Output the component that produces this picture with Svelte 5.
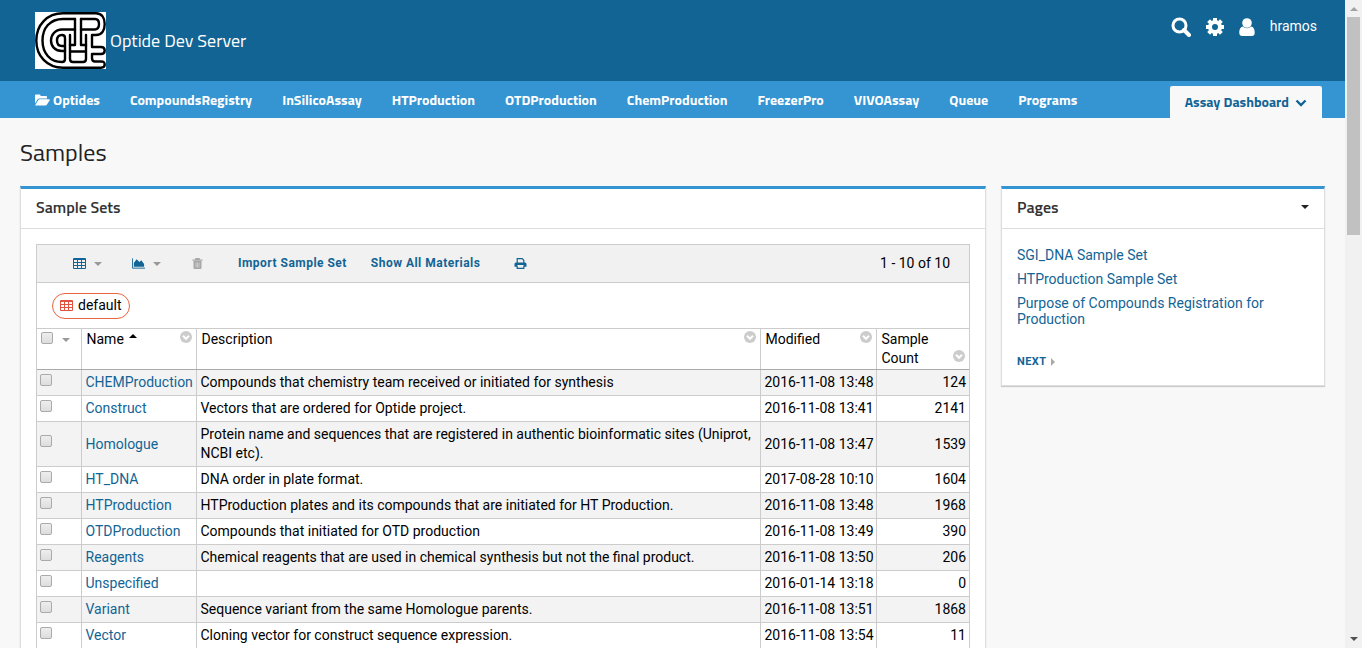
<script>
  const tabs = ['CompoundsRegistry', 'InSilicoAssay', 'HTProduction', 'OTDProduction', 'ChemProduction', 'FreezerPro', 'VIVOAssay', 'Queue', 'Programs'];
  const rows = [
    ['CHEMProduction', 'Compounds that chemistry team received or initiated for synthesis', '2016-11-08 13:48', 124],
    ['Construct', 'Vectors that are ordered for Optide project.', '2016-11-08 13:41', 2141],
    ['Homologue', 'Protein name and sequences that are registered in authentic bioinformatic sites (Uniprot, NCBI etc).', '2016-11-08 13:47', 1539],
    ['HT_DNA', 'DNA order in plate format.', '2017-08-28 10:10', 1604],
    ['HTProduction', 'HTProduction plates and its compounds that are initiated for HT Production.', '2016-11-08 13:48', 1968],
    ['OTDProduction', 'Compounds that initiated for OTD production', '2016-11-08 13:49', 390],
    ['Reagents', 'Chemical reagents that are used in chemical synthesis but not the final product.', '2016-11-08 13:50', 206],
    ['Unspecified', '', '2016-01-14 13:18', 0],
    ['Variant', 'Sequence variant from the same Homologue parents.', '2016-11-08 13:51', 1868],
    ['Vector', 'Cloning vector for construct sequence expression.', '2016-11-08 13:54', 11]
  ];
  const pages = ['SGI_DNA Sample Set', 'HTProduction Sample Set', 'Purpose of Compounds Registration for Production'];
</script>

{#snippet grid()}
  <svg class="grid" viewBox="0 0 13 11" aria-hidden="true">
    <path fill="currentColor" fill-rule="evenodd" d="M1 0h11a1 1 0 0 1 1 1v9a1 1 0 0 1-1 1H1a1 1 0 0 1-1-1V1a1 1 0 0 1 1-1zM1 2v2h3V2zm4 0v2h3V2zm4 0v2h3V2zM1 5v2h3V5zm4 0v2h3V5zm4 0v2h3V5zM1 8v2h3V8zm4 0v2h3V8zm4 0v2h3V8z" />
  </svg>
{/snippet}

{#snippet menu(label)}
  <button class="colmenu" aria-label={label}>
    <svg viewBox="0 0 12 12" aria-hidden="true"><circle cx="6" cy="6" r="6" fill="#ccc" /><path d="M3 4.800l3 3 3-3" fill="none" stroke="#fff" stroke-width="2" /></svg>
  </button>
{/snippet}

<div class="window">
  <div class="page">
    <header>
      <a class="brand" href="#home">
        <svg class="logo" viewBox="0 0 71 57" aria-hidden="true">
          <rect width="71" height="57" fill="#fff" />
          <g fill="none" stroke="#000" stroke-width="2.400" stroke-linejoin="round" stroke-linecap="round">
            <path d="M61 1.300H28C12 1.300 1.300 13 1.300 28.500S12 55.700 28 55.700H66Q69.700 55.700 69.700 52.500T66 49.500H60Q57 49.500 57 46V42H66Q69.700 42 69.700 38.500T66 35H57V23H61C67 23 69.700 18 69.700 12S67 1.300 61 1.300Z" />
            <path d="M40 7H28C15 7 7.500 16 7.500 28.500S15 50 27 50Q30 50 30 47V39H27C20 39 16 34 16 28.500S20 17.500 27 17.500H40" />
            <path d="M46 7H60Q64 7 64 12T60 17.500H46" />
            <path d="M30 39V26Q30 23 27 23Q22 23 22 28.500T27 34H30" />
            <path d="M40 7V33H35V23M46 7V33H51V23" />
            <path d="M35 33V47Q35 50 38 50H48Q51 50 51 47V33M35 39.500H51" />
          </g>
        </svg>
        <span>Optide Dev Server</span>
      </a>
      <div class="user">
        <button class="search" aria-label="Search"><svg viewBox="0 0 20 20" aria-hidden="true"><circle cx="8.500" cy="8.500" r="6.500" fill="none" stroke="#fff" stroke-width="3" /><path d="M13 13l5 5" stroke="#fff" stroke-width="4" stroke-linecap="round" /></svg></button>
        <button aria-label="Admin"><svg viewBox="0 0 20 20" aria-hidden="true"><circle cx="10" cy="10" r="5" fill="none" stroke="#fff" stroke-width="4" /><g stroke="#fff" stroke-width="4"><path d="M10 1v4M10 15v4M1 10h4M15 10h4M3.600 3.600l3 3M13.400 13.400l3 3M3.600 16.400l3-3M13.400 6.600l3-3" /></g></svg></button>
        <button aria-label="Account"><svg viewBox="0 0 20 20" aria-hidden="true"><circle cx="10" cy="6" r="4.800" fill="#fff" /><path d="M6 9.500C3 10 2.300 13 2.300 16c0 2 1 3 3 3h9.400c2 0 3-1 3-3 0-3-.7-6-3.700-6.500-2 2.200-6 2.200-8 0z" fill="#fff" /></svg></button>
        <span>hramos</span>
      </div>
    </header>
    <nav>
      <a href="#optides" class="folder"><svg viewBox="0 0 15 12" aria-hidden="true"><path fill="#fff" d="M0 9.500V1.500Q0 .5 1 .5h3.500q1 0 1 1V2H11q1 0 1 1v1.500H4.500q-1.200 0-2 1zM.3 11L3.200 6.200q.6-.9 1.600-.9H14q1.300 0 .7 1L12 10.600q-.6.900-1.600.9H.8q-.7 0-.5-.5z" /></svg>Optides</a>
      {#each tabs as tab}<a href="#{tab}">{tab}</a>{/each}
      <a href="#dashboard" class="active">Assay Dashboard<svg viewBox="0 0 12 8" aria-hidden="true"><path d="M1.500 1.500L6 6l4.500-4.500" fill="none" stroke="currentColor" stroke-width="2.400" /></svg></a>
    </nav>
    <main>
      <h1>Samples</h1>
      <div class="columns">
        <section>
          <h2>Sample Sets</h2>
          <div class="body">
            <div class="region">
              <div class="toolbar">
                <button class="views" aria-label="Grid views">{@render grid()}<i class="caret"></i></button>
                <button class="charts" aria-label="Charts"><svg viewBox="0 0 14 11" aria-hidden="true"><path d="M.5 0v10.500H14" fill="none" stroke="currentColor" /><path fill="currentColor" d="M2 9V5l3-4 3 3 2-2 3 4v3z" /></svg><i class="caret"></i></button>
                <button class="delete" aria-label="Delete" disabled><svg viewBox="0 0 10 11" aria-hidden="true"><path fill="#a8a8a8" d="M3 0h4l.7 1.500H10v1.300H0V1.500h2.300zM1 3h8v7q0 1-1 1H2q-1 0-1-1z" /><path d="M3.500 4.500v5M5 4.500v5M6.500 4.500v5" stroke="#ddd" stroke-width=".7" /></svg></button>
                <button class="import">Import Sample Set</button>
                <button class="show">Show All Materials</button>
                <button aria-label="Print"><svg viewBox="0 0 12 11" aria-hidden="true"><path d="M2.700 5V.7h5L9.300 2.300V5M2.700 7.500v2.800h6.600V7.500" fill="none" stroke="currentColor" stroke-width="1.200" /><path fill="currentColor" d="M1.500 4.500h9Q12 4.500 12 6v2.800H9.500V7h-7v1.800H0V6q0-1.500 1.500-1.500z" /></svg></button>
                <span class="count">1 - 10 of 10</span>
              </div>
              <div class="context"><button>{@render grid()}default</button></div>
              <table>
                <colgroup><col class="c1" /><col class="c2" /><col /><col class="c4" /><col class="c5" /></colgroup>
                <thead>
                  <tr>
                    <th><input type="checkbox" aria-label="Select all" /><i class="caret"></i></th>
                    <th>Name<i class="sorted"></i>{@render menu('Name menu')}</th>
                    <th>Description{@render menu('Description menu')}</th>
                    <th>Modified{@render menu('Modified menu')}</th>
                    <th>Sample Count{@render menu('Sample Count menu')}</th>
                  </tr>
                </thead>
                <tbody>
                  {#each rows as [name, description, modified, count]}
                    <tr>
                      <td class="pick"><input type="checkbox" aria-label="Select {name}" /></td>
                      <td><a href="#{name}">{name}</a></td>
                      <td>{description}</td>
                      <td class="date">{modified}</td>
                      <td class="num">{count}</td>
                    </tr>
                  {/each}
                </tbody>
              </table>
            </div>
          </div>
        </section>
        <section class="side">
          <h2>Pages<button aria-label="Pages menu"><i class="caret"></i></button></h2>
          <div class="body">
            <ul>
              {#each pages as p}<li><a href="#{p}">{p}</a></li>{/each}
            </ul>
            <a class="next" href="#next">NEXT<i></i></a>
          </div>
        </section>
      </div>
    </main>
  </div>
  <div class="scrollbar" aria-hidden="true"><i class="up"></i><span></span><i class="down"></i></div>
</div>

<style>
  :global(body) { margin: 0; }
  * { box-sizing: border-box; }
  .window { display: flex; height: 100vh; overflow: hidden; font: 14px/19px Roboto, sans-serif; color: #000; }
  .page { flex: 1; min-width: 0; overflow: hidden; background: #f8f8f8; }
  a { color: #126495; text-decoration: none; }
  button { display: inline-flex; align-items: center; padding: 0; border: 0; background: none; color: inherit; font: inherit; }
  header { display: flex; justify-content: space-between; height: 81px; padding: 12px 28px 12px 35px; background: #126495; color: #fff; }
  .brand { display: flex; align-items: center; gap: 4px; height: 57px; color: #fff; font: 18px "Titillium Web", "Noto Sans", sans-serif; }
  .logo { width: 71px; height: 57px; }
  .user { display: flex; align-items: center; gap: 12px; height: 30px; }
  .user svg { width: 20px; height: 20px; }
  .user .search { margin-right: 2px; }
  .user span { margin-left: 1px; padding-bottom: 2px; }
  nav { display: flex; gap: 30px; height: 37px; padding: 0 23px 0 35px; background: #3495d2; font: bold 14px/38px "Titillium Web", "Noto Sans", sans-serif; white-space: nowrap; }
  nav a { color: #fff; }
  .folder svg { width: 15px; height: 12px; margin-right: 3px; vertical-align: -1px; }
  nav .active { align-self: flex-end; height: 32px; margin-left: auto; padding: 0 15px; border-radius: 2px 2px 0 0; background: #f8f8f8; color: #126495; line-height: 31px; }
  .active svg { width: 12px; height: 8px; margin-left: 6px; }
  main { padding: 20px; }
  h1 { margin: 0 0 20px; font: 24px/28px "Titillium Web", "Noto Sans", sans-serif; color: #222; }
  .columns { display: flex; align-items: flex-start; gap: 15px; }
  section { flex: 1; min-width: 0; border: 1px solid #ddd; border-top: 3px solid #3495d2; background: #fff; box-shadow: 0 1px 1px #ccc; }
  .side { flex: 0 0 324px; }
  h2 { display: flex; justify-content: space-between; align-items: center; height: 40px; margin: 0; padding: 0 15px 3px; border-bottom: 1px solid #ddd; font: 600 16px "Titillium Web", "Noto Sans", sans-serif; color: #333; }
  .body { padding: 15px; }
  .region { border: 1px solid #ccc; }
  .toolbar { display: flex; align-items: center; height: 38px; padding: 0 19px 0 36px; border-bottom: 1px solid #ccc; background: #f1f1f1; color: #126495; }
  .toolbar button { font-size: 12px; font-weight: 700; letter-spacing: 0.04em; }
  .toolbar svg { width: 13px; height: 11px; }
  .toolbar .views, .toolbar .charts { gap: 8px; margin-right: 30px; }
  .toolbar .delete { margin-right: 34px; }
  .toolbar .import { margin-right: 24px; }
  .toolbar .show { margin-right: 34px; }
  .count { margin-left: auto; color: #000; }
  .caret { display: inline-block; border: 4px solid transparent; border-top-color: #999; border-bottom: 0; }
  h2 .caret { border-top-color: #222; }
  .context { display: flex; align-items: center; height: 45px; padding-left: 15px; }
  .context button { gap: 5px; height: 26px; padding: 0 7px; border: 1px solid #e8643c; border-radius: 13px; }
  .grid { width: 13px; height: 11px; }
  .context .grid { color: #e2533f; }
  table { width: 100%; table-layout: fixed; border-collapse: collapse; border-top: 1px solid #ccc; }
  .c1 { width: 44px; } .c2 { width: 115px; } .c4 { width: 116px; } .c5 { width: 93px; }
  th { height: 41px; padding: 1px 4px 1px 5px; border-right: 1px solid #ccc; border-bottom: 1px solid #aaa; font-weight: 400; text-align: left; vertical-align: top; }
  td { height: 26px; padding: 3px 3px 3px 4px; border-right: 1px solid #ccc; border-bottom: 1px solid #ccc; }
  th:first-child { padding-left: 4px; }
  th:last-child, td:last-child { border-right: 0; }
  tbody tr:nth-child(odd) { background: #f3f3f3; }
  .pick { padding: 1px 3px 5px; line-height: 14px; }
  .date { white-space: nowrap; }
  .num { text-align: right; }
  input { appearance: none; width: 12px; height: 12px; margin: 0; border: 1px solid #aaa; border-radius: 2px; background: linear-gradient(#eee, #ddd); }
  th .caret { margin-left: 9px; vertical-align: 2px; }
  .colmenu { float: right; margin-top: 1px; }
  .colmenu svg { width: 12px; height: 12px; }
  .sorted { display: inline-block; margin-left: 5px; border: 4px solid transparent; border-bottom-color: #000; border-top: 0; vertical-align: 6px; }
  ul { margin: -1px 0 22px; padding: 0; list-style: none; line-height: 16px; }
  li { padding: 4px 0; }
  .next { display: block; font-size: 11px; font-weight: 700; line-height: 17px; letter-spacing: 0.04em; }
  .next i { display: inline-block; margin-left: 4px; border: 4px solid transparent; border-left-color: #aaa; border-right: 0; vertical-align: -1px; }
  .scrollbar { display: flex; flex-direction: column; align-items: center; width: 17px; padding: 7px 0; background: #f1f1f1; }
  .scrollbar span { width: 13px; height: 218px; margin-top: 6px; background: #c1c1c1; }
  .scrollbar i { border: 4px solid transparent; }
  .scrollbar .up { border-top: 0; border-bottom-color: #a3a3a3; }
  .scrollbar .down { margin-top: auto; border-bottom: 0; border-top-color: #505050; }
</style>
